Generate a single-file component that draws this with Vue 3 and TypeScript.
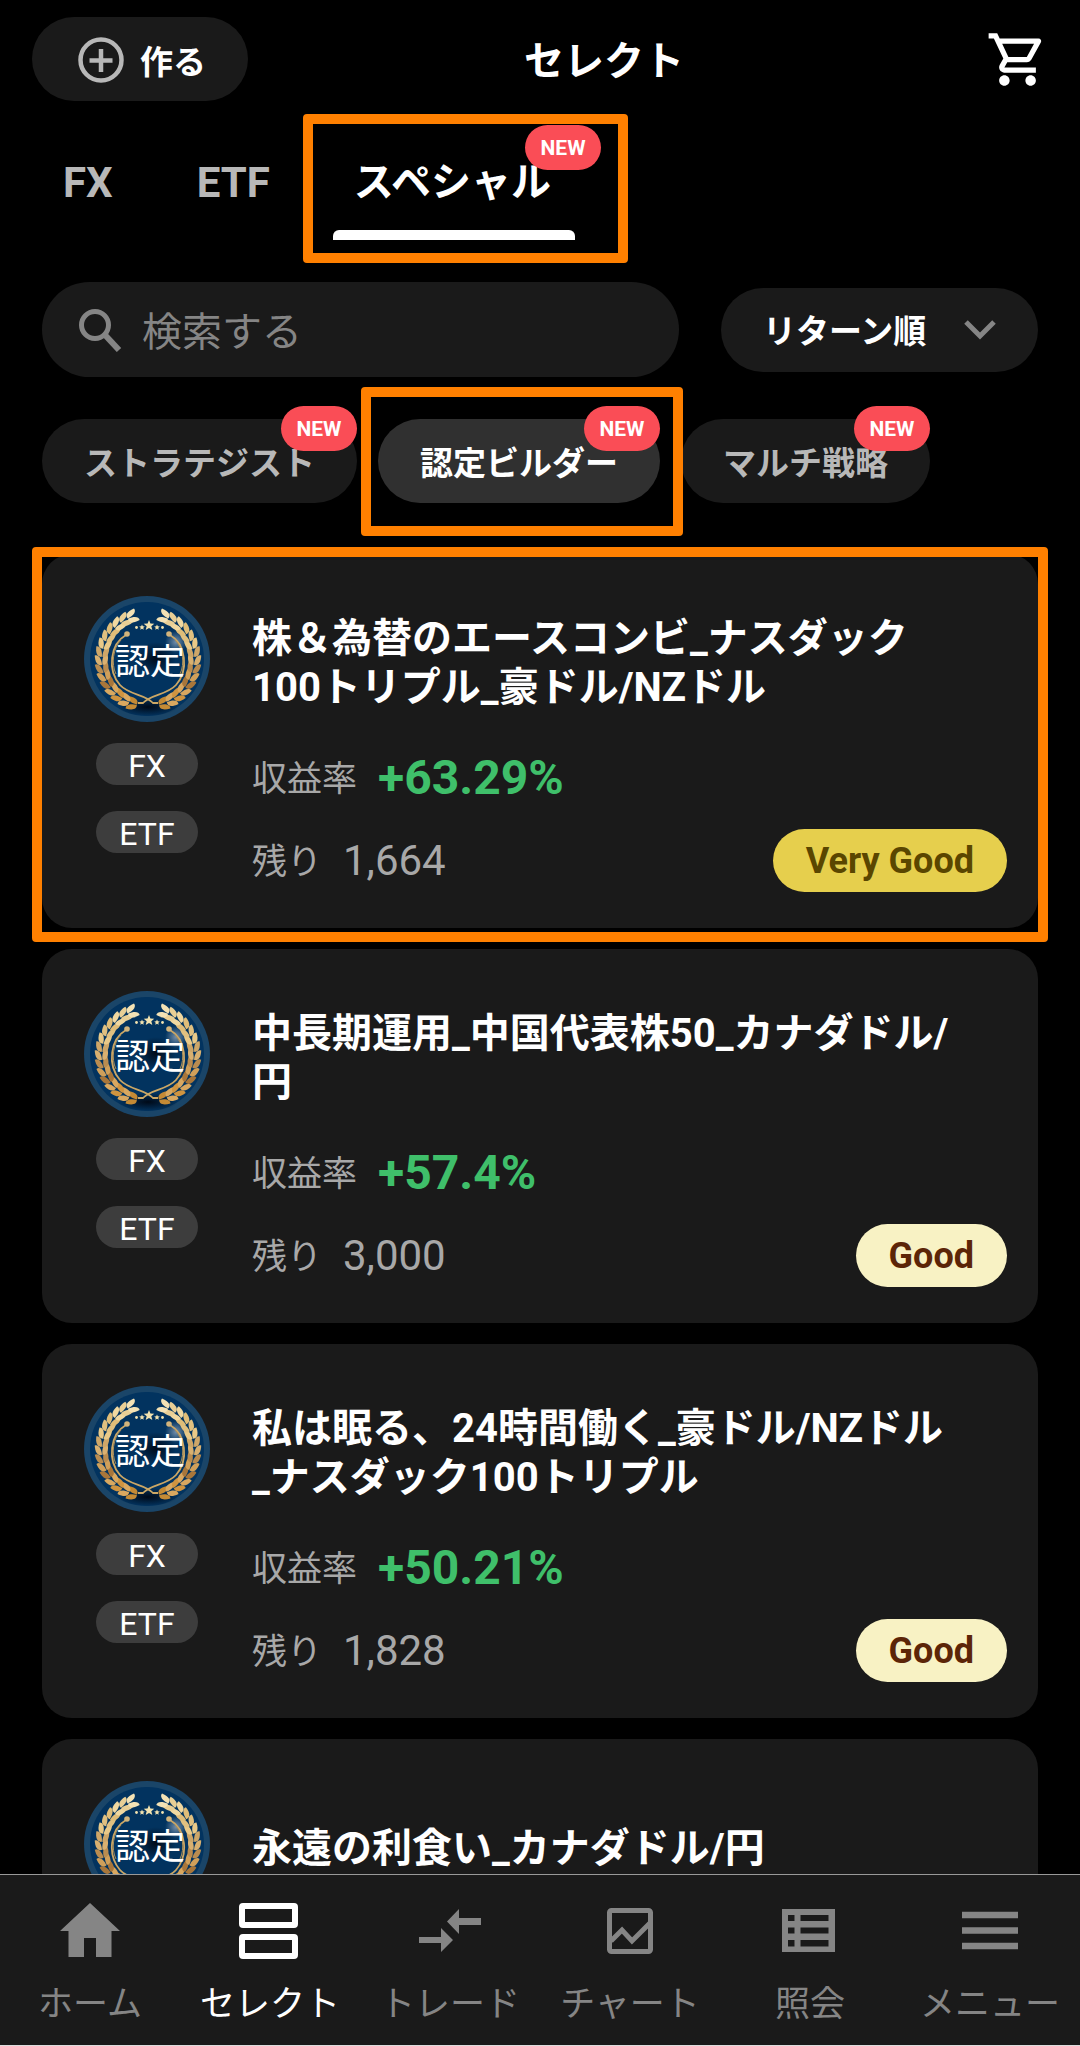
<script setup lang="ts">
import { ref } from 'vue'

interface Tab { label: string; isNew?: boolean }
interface Strategy {
  title: string
  tags?: string[]
  rate?: string
  remaining?: string
  grade?: 'Very Good' | 'Good'
}

const tabs: Tab[] = [{ label: 'FX' }, { label: 'ETF' }, { label: 'スペシャル', isNew: true }]
const activeTab = ref('スペシャル')

const filters = ['ストラテジスト', '認定ビルダー', 'マルチ戦略']
const activeFilter = ref('認定ビルダー')

const keyword = ref('')
const sort = ref('return')

const strategies: Strategy[] = [
  { title: '株＆為替のエースコンビ_ナスダック\n100トリプル_豪ドル/NZドル', tags: ['FX', 'ETF'], rate: '+63.29%', remaining: '1,664', grade: 'Very Good' },
  { title: '中長期運用_中国代表株50_カナダドル/\n円', tags: ['FX', 'ETF'], rate: '+57.4%', remaining: '3,000', grade: 'Good' },
  { title: '私は眠る、24時間働く_豪ドル/NZドル\n_ナスダック100トリプル', tags: ['FX', 'ETF'], rate: '+50.21%', remaining: '1,828', grade: 'Good' },
  { title: '永遠の利食い_カナダドル/円' },
]

// Laurel leaves, from the stem at the bottom up to the tip of the branch.
const leafColors = ['#c48a35', '#d9a860', '#cf9440', '#d9a860', '#a8763a', '#d0a05a', '#b98c50', '#d8b070', '#cda668', '#e8c988', '#e0c080', '#e0bd78', '#f0d8a0', '#e9cf95', '#f3e2b5']
const leaves = leafColors.map((color, i) => {
  const deg = 104 + i * 10
  const rad = (deg * Math.PI) / 180
  const x = (64 + 46 * Math.cos(rad)).toFixed(2)
  const y = (64 + 46 * Math.sin(rad)).toFixed(2)
  return { color, transform: `translate(${x} ${y}) rotate(${deg + 90})` }
})

const navItems = [
  { id: 'home', label: 'ホーム' },
  { id: 'select', label: 'セレクト' },
  { id: 'trade', label: 'トレード' },
  { id: 'chart', label: 'チャート' },
  { id: 'inquiry', label: '照会' },
  { id: 'menu', label: 'メニュー' },
]
</script>

<template>
  <div class="app">
    <main class="content">
      <header class="header">
        <button class="create" type="button">
          <svg class="create-icon" viewBox="0 0 46 46" fill="none" stroke="#b8b8b8" aria-hidden="true">
            <circle cx="23" cy="23" r="20.5" stroke-width="4.5" />
            <path d="M23 12v23M11.500 23.500h23" stroke-width="4.500" />
          </svg>
          作る
        </button>
        <h1 class="title">セレクト</h1>
        <button class="cart" type="button" aria-label="カート">
          <svg viewBox="0 0 24 24" fill="#fff" aria-hidden="true">
            <path d="M15.550 13c.75 0 1.410-.41 1.750-1.030l3.580-6.490A.996.996 0 0 0 20.010 4H5.210l-.94-2H1v2h2l3.600 7.590-1.350 2.440C4.520 15.370 5.480 17 7 17h12v-2H7l1.100-2h7.450zM6.160 6h12.150l-2.760 5H8.530L6.160 6zM7 18c-1.100 0-1.990.9-1.990 2S5.900 22 7 22s2-.9 2-2-.9-2-2-2zm10 0c-1.100 0-1.990.9-1.990 2s.89 2 1.990 2 2-.9 2-2-.9-2-2-2z" />
          </svg>
        </button>
      </header>

      <nav class="tabs" aria-label="カテゴリ">
        <a
          v-for="tab in tabs"
          :key="tab.label"
          href="#"
          class="tab"
          :class="{ active: activeTab === tab.label }"
          @click.prevent="activeTab = tab.label"
        >
          {{ tab.label }}
          <span v-if="tab.isNew" class="badge tab-badge">NEW</span>
          <span v-if="tab.isNew" class="frame tab-frame"></span>
        </a>
      </nav>

      <div class="tools">
        <label class="search">
          <svg class="search-icon" viewBox="0 0 44 44" fill="none" stroke="#858585" aria-hidden="true">
            <circle cx="17" cy="17" r="13.500" stroke-width="5" />
            <path d="M27 27l14 15" stroke-width="6" />
          </svg>
          <input v-model="keyword" type="text" placeholder="検索する" aria-label="検索する" />
        </label>
        <div class="sort">
          <select v-model="sort" aria-label="並び順">
            <option value="return">リターン順</option>
          </select>
          <svg class="chevron" viewBox="0 0 32 20" fill="none" stroke="#858585" stroke-width="5" aria-hidden="true">
            <path d="M2 2l14 14L30 2" />
          </svg>
        </div>
      </div>

      <div class="chips">
        <button
          v-for="name in filters"
          :key="name"
          type="button"
          class="chip"
          :class="{ active: activeFilter === name }"
          @click="activeFilter = name"
        >
          {{ name }}
          <span class="badge chip-badge">NEW</span>
          <span v-if="activeFilter === name" class="frame chip-frame"></span>
        </button>
      </div>

      <ul class="list">
        <li v-for="(item, index) in strategies" :key="item.title" class="card">
          <div class="side">
            <svg class="seal" viewBox="0 0 126 126" role="img" aria-label="認定">
              <defs>
                <radialGradient id="seal-shade" cx="0.5" cy="0.5" r="0.5">
                  <stop offset="0" stop-color="#000a18" />
                  <stop offset="1" stop-color="#000a18" stop-opacity="0" />
                </radialGradient>
                <radialGradient id="seal-glow" cx="0.5" cy="0.5" r="0.5">
                  <stop offset="0" stop-color="#8fa5bd" stop-opacity="0.8" />
                  <stop offset="1" stop-color="#8fa5bd" stop-opacity="0" />
                </radialGradient>
              </defs>
              <circle cx="63" cy="63" r="63" fill="#1a4568" />
              <circle cx="63" cy="63" r="57" fill="#02335f" />
              <ellipse cx="64" cy="111" rx="30" ry="9" fill="url(#seal-shade)" />
              <ellipse cx="72" cy="62" rx="20" ry="16" fill="url(#seal-shade)" />
              <circle cx="92" cy="46" r="11" fill="url(#seal-glow)" />
              <g v-for="side in 2" :key="side" :transform="side === 2 ? 'translate(128 0) scale(-1 1)' : undefined">
                <g v-for="leaf in leaves" :key="leaf.transform" :transform="leaf.transform" :fill="leaf.color">
                  <path d="M0 -.2C-1 -4 2 -7 10 -6.500C11 -3 7 -.2 0 -.2z" />
                  <path d="M0 .2C-1 4 2 7 10 6.500C11 3 7 .2 0 .2z" />
                </g>
                <path d="M42 39C26 48 23 74 36 89C45 99 61 98 69 107L74 107" fill="none" stroke="#cba765" stroke-width="1.800" />
                <path d="M37 44C29 52 27 68 32 78" fill="none" stroke="#a88f5c" stroke-width="1" />
                <circle cx="43" cy="38" r="2.800" fill="#d2b47c" />
              </g>
              <g fill="#f2e3b0">
                <path d="M65 24l1.400 3.600 3.900.2-3 2.500 1 3.700-3.300-2.100-3.300 2.100 1-3.700-3-2.500 3.900-.2z" />
                <path d="M58 28.500l.8 1.800 2 .2-1.500 1.300.4 2-1.700-1-1.700 1 .4-2-1.500-1.300 2-.2zM73 28.500l.8 1.800 2 .2-1.500 1.300.4 2-1.700-1-1.700 1 .4-2-1.500-1.300 2-.2z" />
                <circle cx="52.500" cy="31.500" r="1.400" />
                <circle cx="78.500" cy="31.500" r="1.400" />
              </g>
              <text x="66" y="78" text-anchor="middle" class="seal-text">認定</text>
            </svg>
            <span v-for="tag in item.tags" :key="tag" class="tag">{{ tag }}</span>
          </div>
          <div class="body">
            <h2 class="card-title">{{ item.title }}</h2>
            <p v-if="item.rate" class="row">
              <span class="label">収益率</span>
              <strong class="rate">{{ item.rate }}</strong>
            </p>
            <p v-if="item.remaining" class="row">
              <span class="label">残り</span>
              <span class="count">{{ item.remaining }}</span>
              <span class="grade" :class="{ top: item.grade === 'Very Good' }">{{ item.grade }}</span>
            </p>
          </div>
          <span v-if="index === 0" class="frame card-frame"></span>
        </li>
      </ul>
    </main>

    <nav class="bottom" aria-label="メイン">
      <a v-for="item in navItems" :key="item.id" href="#" class="nav-item" :class="{ active: item.id === 'select' }">
        <svg class="nav-icon" viewBox="0 0 64 64" fill="none" stroke="currentColor" aria-hidden="true">
          <path v-if="item.id === 'home'" fill="currentColor" stroke="none" d="M32 4L62 32H53.500V58H38V39H26V58H10.500V32H2z" />
          <template v-else-if="item.id === 'select'">
            <rect x="4" y="7" width="53" height="19" rx="1" stroke-width="6" />
            <rect x="4" y="38" width="53" height="19" rx="1" stroke-width="6" />
          </template>
          <path v-else-if="item.id === 'trade'" fill="currentColor" stroke="none" d="M41 10V19H63V26H41V35L29 22.500zM1 38H23V29L35 41L23 53V44H1z" />
          <template v-else-if="item.id === 'chart'">
            <rect x="11.500" y="11.500" width="41" height="41" rx="2" stroke-width="5" />
            <path d="M13 42L24 31L34 42L52 24" stroke-width="5" />
          </template>
          <path
            v-else-if="item.id === 'inquiry'"
            fill="currentColor"
            stroke="none"
            fill-rule="evenodd"
            d="M4 10H57V53H4zM10 16V22H16.500V16zM22.500 16V22H50.500V16zM10 28.500V34.500H16.500V28.500zM22.500 28.500V34.500H50.500V28.500zM10 41V47.500H16.500V41zM22.500 41V47.500H50.500V41z"
          />
          <path v-else d="M4 16H60M4 31.500H60M4 47H60" stroke-width="6.500" />
        </svg>
        {{ item.label }}
      </a>
    </nav>
  </div>
</template>

<style>
body {
  margin: 0;
  background: #000;
}
</style>

<style scoped>
.app {
  display: flex;
  flex-direction: column;
  height: 100vh;
  overflow: hidden;
  background: #000;
  color: #fff;
  font-family: Roboto, "Noto Sans CJK JP", sans-serif;
}
button,
input,
select {
  margin: 0;
  border: 0;
  font: inherit;
  color: inherit;
}
a {
  color: inherit;
  text-decoration: none;
}
.content {
  flex: 1;
  min-height: 0;
  overflow-y: auto;
  scrollbar-width: none;
}
.header {
  display: flex;
  align-items: center;
  padding: 17px 0 0 32px;
}
.create {
  display: flex;
  align-items: center;
  gap: 16px;
  height: 84px;
  padding: 2px 42px 0 46px;
  border-radius: 42px;
  background: #1a1a1a;
  font-size: 33px;
  font-weight: 700;
}
.create-icon {
  width: 46px;
  height: 46px;
}
.title {
  flex: 1;
  margin: 0;
  padding-top: 6px;
  text-align: center;
  font-size: 40px;
  line-height: 50px;
  font-weight: 700;
}
.cart {
  width: 120px;
  padding: 0 31px 0 26px;
  background: none;
}
.cart svg {
  display: block;
  width: 63px;
  height: 63px;
}
.tabs {
  display: flex;
  gap: 42px;
  margin: 25px 42px 0;
}
.tab {
  position: relative;
  padding: 0 21px;
  font-size: 42px;
  line-height: 114px;
  font-weight: 700;
  color: #b8b8b8;
}
.tab.active {
  padding: 0 24px 0 21px;
  font-size: 40px;
  color: #fff;
}
.tab.active::after {
  content: "";
  position: absolute;
  right: 0;
  bottom: 0;
  left: 0;
  height: 10px;
  border-radius: 6px 6px 0 0;
  background: #fff;
}
.badge {
  position: absolute;
  width: 76px;
  height: 45px;
  border-radius: 23px;
  background: #fa4d56;
  color: #fff;
  font-size: 21px;
  line-height: 47px;
  font-weight: 700;
  text-align: center;
}
.tab-badge {
  top: -1px;
  right: -26px;
}
.chip-badge {
  top: -13px;
  right: 0;
}
.frame {
  position: absolute;
  z-index: 1;
  border: 10px solid #ff8000;
  border-radius: 4px;
  pointer-events: none;
}
.tab-frame {
  inset: -12px -53px -23px -30px;
}
.chip-frame {
  inset: -32px -23px -33px -17px;
}
.card-frame {
  inset: -7px -10px -14px;
}
.tools {
  display: flex;
  align-items: center;
  gap: 42px;
  margin: 42px 42px 0;
}
.search {
  display: flex;
  flex: 1;
  align-items: center;
  gap: 20px;
  min-width: 0;
  height: 95px;
  padding: 0 36px;
  border-radius: 48px;
  background: #1a1a1a;
}
.search-icon {
  flex: none;
  width: 44px;
  height: 44px;
}
.search input {
  flex: 1;
  min-width: 0;
  padding: 6px 0 0;
  outline: 0;
  background: none;
  font-size: 40px;
  line-height: 60px;
}
.search input::placeholder {
  color: #858585;
  opacity: 1;
}
.sort {
  position: relative;
  flex: none;
}
.sort select {
  display: block;
  box-sizing: border-box;
  width: 317px;
  height: 84px;
  padding: 4px 42px 0;
  border-radius: 42px;
  appearance: none;
  background: #1a1a1a;
  font-size: 33px;
  font-weight: 700;
}
.chevron {
  position: absolute;
  top: 32px;
  right: 42px;
  width: 32px;
  height: 20px;
  pointer-events: none;
}
.chips {
  display: flex;
  gap: 21px;
  margin: 42px 42px 0;
}
.chip {
  position: relative;
  height: 84px;
  padding: 0 42px;
  border-radius: 42px;
  background: #1a1a1a;
  color: #b8b8b8;
  font-size: 33px;
  font-weight: 700;
  white-space: nowrap;
}
.chip.active {
  background: #303030;
  color: #fff;
}
.list {
  display: flex;
  flex-direction: column;
  gap: 21px;
  margin: 51px 42px 0;
  padding: 0 0 21px;
  list-style: none;
}
.card {
  position: relative;
  display: flex;
  gap: 42px;
  box-sizing: border-box;
  min-height: 374px;
  padding: 42px 31px 36px 42px;
  border-radius: 30px;
  background: #1a1a1a;
}
.side {
  display: flex;
  flex-direction: column;
  align-items: center;
}
.seal {
  width: 126px;
  height: 126px;
}
.seal-text {
  fill: #fff;
  font-family: "Noto Sans CJK JP", sans-serif;
  font-size: 35px;
}
.tag {
  width: 102px;
  height: 42px;
  margin-top: 21px;
  border-radius: 21px;
  background: #3d3d3d;
  font-size: 32px;
  line-height: 46px;
  text-align: center;
}
.tag + .tag {
  margin-top: 26px;
}
.body {
  flex: 1;
  min-width: 0;
}
.card-title {
  display: flex;
  align-items: center;
  box-sizing: border-box;
  height: 130px;
  margin: 0;
  padding-top: 4px;
  font-size: 40px;
  line-height: 49px;
  font-weight: 700;
  white-space: pre-line;
}
.row {
  display: flex;
  align-items: center;
  gap: 21px;
  height: 63px;
  margin: 20px 0 0;
  color: #a8a8a8;
}
.label {
  padding-bottom: 4px;
  font-size: 35px;
}
.rate {
  color: #3fbf6a;
  font-size: 48px;
}
.count {
  font-size: 42px;
}
.grade {
  margin-left: auto;
  padding: 2px 33px 0;
  border-radius: 32px;
  background: #f8f2c4;
  color: #5c2507;
  font-size: 36px;
  line-height: 61px;
  font-weight: 700;
}
.grade.top {
  background: #e6cf4d;
  color: #5a4600;
}
.bottom {
  display: flex;
  height: 170px;
  border-top: 1px solid #999;
  border-bottom: 1px solid #ddd;
  background: #1a1a1a;
}
.nav-item {
  display: flex;
  flex: 1;
  flex-direction: column;
  align-items: center;
  gap: 18px;
  padding-top: 24px;
  color: #858585;
  font-size: 35px;
  line-height: 48px;
  white-space: nowrap;
}
.nav-item.active {
  color: #fff;
}
.nav-icon {
  width: 64px;
  height: 64px;
}
</style>
